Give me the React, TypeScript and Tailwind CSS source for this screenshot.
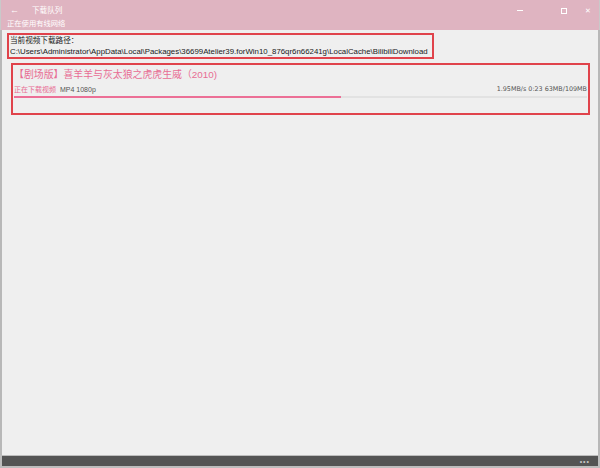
import React from "react";

const base = { fontFamily: '"Liberation Sans", "Noto Sans CJK SC", sans-serif' };

export default function App() {
  return (
    <div className="w-[600px] h-[468px] flex flex-col bg-[#efefef] overflow-hidden" style={base}>
      {/* title bar */}
      <div className="h-[30px] bg-[#dfb4c1] flex flex-col text-white shrink-0 border-x border-[#c9c9c9]">
        <div className="flex items-center h-[20px] pt-[1px]">
          <span className="ml-[9px] w-[10px] text-[9px] leading-none">←</span>
          <span className="ml-[12px] text-[7.6px] leading-none">下载队列</span>
          <div className="ml-auto flex items-center">
            <span className="w-[10px] flex justify-center">
              <span className="w-[6px] h-px bg-white block"></span>
            </span>
            <span className="ml-[34px] w-[10px] flex justify-center">
              <span className="w-[6px] h-[6px] border border-white block"></span>
            </span>
            <span className="ml-[14px] mr-[6px] w-[10px] flex justify-center text-[7px] leading-none">✕</span>
          </div>
        </div>
        <div className="ml-[6px] text-[7.3px] leading-none">正在使用有线网络</div>
      </div>

      {/* body */}
      <div className="flex-1 flex flex-col border-x-2 border-[#b8b8b8] pt-[3px]">
        <div className="ml-[5px] w-[427px] h-[26px] border-2 border-[#e0434b] flex flex-col justify-center pl-[1px] text-[#1a1a1a]">
          <div className="text-[7.6px] leading-[11px]">当前视频下载路径：</div>
          <div className="text-[7.85px] leading-[11px] whitespace-nowrap">
            C:\Users\Administrator\AppData\Local\Packages\36699Atelier39.forWin10_876qr6n66241g\LocalCache\BilibiliDownload
          </div>
        </div>

        <div className="mt-[4px] ml-[9px] w-[579px] h-[52px] border-2 border-[#e0434b] px-[1px] pt-[3px]">
          <div className="text-[9.9px] leading-[14px] text-[#e86d94]">【剧场版】喜羊羊与灰太狼之虎虎生威（2010)</div>
          <div className="flex items-center h-[12px] text-[7px] leading-none mt-[1px]">
            <span className="text-[#e86d94]">正在下载视频</span>
            <span className="ml-[4px] text-[#555]">MP4 1080p</span>
            <span className="ml-auto text-[#555]" style={{ fontFamily: '"DejaVu Sans", sans-serif', fontSize: "6.4px" }}>
              1.95MB/s 0:23 63MB/109MB
            </span>
          </div>
          <div className="mt-[1px] h-[2px] w-full bg-[#e2e2e2] flex">
            <div className="h-full w-[57%] bg-[#ec6f96]"></div>
          </div>
        </div>

        <div className="flex-1"></div>
      </div>

      {/* bottom bar */}
      <div className="h-[13px] bg-[#545454] border-x-2 border-t border-b-2 border-[#bdbdbd] flex items-center justify-end pr-[8px] shrink-0">
        <span className="text-[#c8c8c8] text-[7px] leading-none tracking-[1px]">•••</span>
      </div>
    </div>
  );
}
